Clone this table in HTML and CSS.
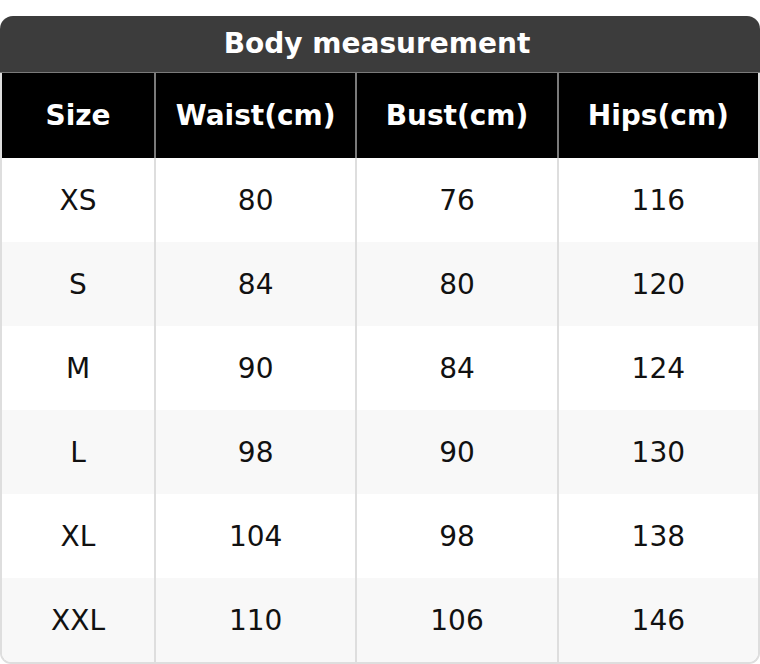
FILE: index.html
```html
<!DOCTYPE html>
<html>
<head>
<meta charset="utf-8">
<link rel="stylesheet" href="styles.css">
</head>
<body>
<div class="card">
  <div class="title">Body measurement</div>
  <table class="sizes">
    <colgroup>
      <col class="c-size">
      <col>
      <col>
      <col>
    </colgroup>
    <thead>
      <tr><th>Size</th><th>Waist(cm)</th><th>Bust(cm)</th><th>Hips(cm)</th></tr>
    </thead>
    <tbody>
      <tr><td>XS</td><td>80</td><td>76</td><td>116</td></tr>
      <tr><td>S</td><td>84</td><td>80</td><td>120</td></tr>
      <tr><td>M</td><td>90</td><td>84</td><td>124</td></tr>
      <tr><td>L</td><td>98</td><td>90</td><td>130</td></tr>
      <tr><td>XL</td><td>104</td><td>98</td><td>138</td></tr>
      <tr><td>XXL</td><td>110</td><td>106</td><td>146</td></tr>
    </tbody>
  </table>
</div>
</body>
</html>
```
FILE: styles.css
```css
html, body {
  margin: 0;
  padding: 0;
  background: #ffffff;
}
body {
  padding-top: 16px;
  font-family: "DejaVu Sans", "Liberation Sans", sans-serif;
}
.card {
  width: 760px;
  box-sizing: border-box;
}
.title {
  height: 57px;
  box-sizing: border-box;
  padding: 0 6px 1px 0;
  border-bottom: 1px solid #7a7a7a;
  background: #3c3c3c;
  color: #ffffff;
  border-radius: 13px 13px 0 0;
  font-weight: bold;
  font-size: 28px;
  display: flex;
  align-items: center;
  justify-content: center;
}
.sizes {
  width: 760px;
  table-layout: fixed;
  border-collapse: separate;
  border-spacing: 0;
  border: 2px solid #dedede;
  border-top: none;
  border-radius: 0 0 11px 11px;
  overflow: hidden;
}
.c-size {
  width: 152px;
}
.sizes th {
  height: 85px;
  padding: 0;
  background: #000000;
  color: #ffffff;
  font-weight: bold;
  font-size: 28px;
  text-align: center;
  border-left: 2px solid #7a7a7a;
}
.sizes th:first-child {
  border-left: none;
}
.sizes td {
  height: 84px;
  padding: 0;
  font-size: 28px;
  color: #111111;
  text-align: center;
  border-left: 2px solid #dedede;
}
.sizes td:first-child {
  border-left: none;
}
.sizes tbody tr:nth-child(even) td {
  background: #f8f8f8;
}
```
